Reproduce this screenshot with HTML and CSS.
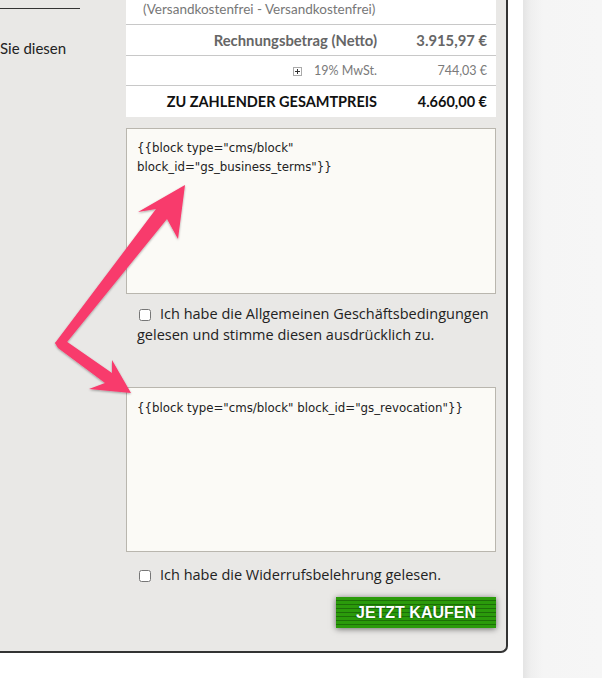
FILE: index.html
```html
<!DOCTYPE html>
<html lang="de">
<head>
    <meta charset="UTF-8">
    <title>Kasse - Bestellung abschließen</title>
    <link rel="stylesheet" href="styles.css">
</head>
<body>

<div class="page">
    <div class="panel">
        <div class="aside">
            <div class="rule"></div>
            <p class="cut">Sie diesen</p>
        </div>

        <div class="checkout">
            <!-- Summen -->
            <table class="totals">
                <tr class="row-shipping">
                    <td colspan="2">(Versandkostenfrei - Versandkostenfrei)</td>
                </tr>
                <tr class="row-net">
                    <td class="label">Rechnungsbetrag (Netto)</td>
                    <td class="value">3.915,97 €</td>
                </tr>
                <tr class="row-tax">
                    <td class="label">
                        <svg class="tax-icon" width="9" height="9" viewBox="0 0 9 9">
                            <rect x="0.5" y="0.5" width="8" height="8" fill="none" stroke="#555" stroke-dasharray="1 1"/>
                            <path d="M4.5 2v5M2 4.5h5" stroke="#333" stroke-width="1"/>
                        </svg>
                        19% MwSt.
                    </td>
                    <td class="value">744,03 €</td>
                </tr>
                <tr class="row-total">
                    <td class="label">ZU ZAHLENDER GESAMTPREIS</td>
                    <td class="value">4.660,00 €</td>
                </tr>
            </table>

            <!-- AGB -->
            <textarea class="terms terms-agb" readonly>{{block type="cms/block" block_id="gs_business_terms"}}</textarea>
            <label class="agree agree-agb">
                <input type="checkbox" id="agb">Ich habe die Allgemeinen Geschäftsbedingungen gelesen und stimme diesen ausdrücklich zu.
            </label>

            <!-- Widerruf -->
            <textarea class="terms terms-rev" readonly>{{block type="cms/block" block_id="gs_revocation"}}</textarea>
            <label class="agree agree-rev">
                <input type="checkbox" id="revocation">Ich habe die Widerrufsbelehrung gelesen.
            </label>

            <div class="actions">
                <button class="buy">JETZT KAUFEN</button>
            </div>
        </div>
    </div>

    <div class="spacer"></div>
    <div class="side"></div>

    <!-- Hinweispfeile -->
    <svg class="arrows" width="602" height="678" viewBox="0 0 602 678">
        <defs>
            <filter id="arrow-shadow" x="-20%" y="-20%" width="140%" height="140%">
                <feDropShadow dx="0" dy="1" stdDeviation="1.2" flood-color="#000" flood-opacity="0.35"/>
            </filter>
        </defs>
        <g fill="#f83a6c" filter="url(#arrow-shadow)">
            <polygon points="185,185 178,239 167,219 63,347 55,343 156,209 138,212"/>
            <polygon points="131,393 89,389 105,383 58,348 55,343 63,339 112,373 112,360"/>
        </g>
    </svg>
</div>

</body>
</html>
```

FILE: styles.css
```css
body {
    margin: 0;
    padding: 0;
    background-color: #fff;
    font-family: Lato, "Open Sans", sans-serif;
}

.page {
    position: relative;
    display: flex;
    width: 602px;
    height: 678px;
    overflow: hidden;
}

.panel {
    display: flex;
    width: 506px;
    height: 651px;
    background-color: #e9e8e6;
    border-right: 2px solid #333;
    border-bottom: 2px solid #333;
    border-bottom-right-radius: 7px;
}

.spacer {
    width: 15px;
}

.side {
    flex: 1;
    background: linear-gradient(to right, #e4e4e4 0px, #efefef 8px, #f5f5f5 20px, #f6f6f6 100%);
}

.aside {
    width: 126px;
}

.rule {
    width: 80px;
    height: 1px;
    margin-top: 8px;
    background-color: #333;
}

.cut {
    margin: 30px 0 0 0;
    font-size: 15px;
    color: #222;
}

.checkout {
    width: 370px;
}

.totals {
    width: 370px;
    border-collapse: collapse;
    background-color: #fff;
    font-size: 13.5px;
}

.totals td {
    padding: 0;
    border-bottom: 1px solid #c8c8c8;
}

.totals tr:last-child td {
    border-bottom: none;
}

.totals .label {
    width: 251px;
    text-align: right;
}

.totals .value {
    text-align: right;
    padding-right: 9px;
}

.row-shipping td {
    height: 24px;
    padding-left: 17px;
    color: #777;
    line-height: 18px;
    vertical-align: top;
}

.row-net td {
    height: 30px;
    font-size: 14.8px;
    font-weight: bold;
    color: #666;
}

.row-tax td {
    height: 29px;
    color: #7a7a7a;
    font-size: 12.5px;
}

.tax-icon {
    margin-right: 9px;
    vertical-align: -1px;
}

.row-total td {
    height: 31px;
    font-size: 14.5px;
    font-weight: bold;
    color: #111;
}

.terms {
    display: block;
    box-sizing: border-box;
    width: 370px;
    margin: 11px 0 0 0;
    padding: 10px 10px;
    background-color: #fbfaf6;
    border: 1px solid #b9b6ae;
    border-radius: 0;
    font-family: "DejaVu Sans", sans-serif;
    font-size: 11.8px;
    line-height: 19px;
    color: #222;
    resize: none;
    outline: none;
}

.terms-agb {
    height: 166px;
}

.terms-rev {
    height: 165px;
    margin-top: 42px;
    padding-top: 11px;
}

.agree {
    display: block;
    padding-left: 11px;
    font-family: "Open Sans", sans-serif;
    font-size: 14.5px;
    line-height: 21px;
    color: #222;
}

.agree input {
    width: 12px;
    height: 12px;
    margin: 0 9px 0 2px;
    vertical-align: -2px;
}

.agree-agb {
    margin-top: 9px;
}

.agree-rev {
    margin-top: 12px;
}

.actions {
    display: flex;
    justify-content: flex-end;
    margin-top: 12px;
}

.buy {
    width: 160px;
    height: 31px;
    padding: 0;
    border: none;
    background-color: #2b9b0b;
    background-image: repeating-linear-gradient(to bottom, #2b9b0b 0px, #2b9b0b 3px, #1d6f08 3px, #1d6f08 4px);
    box-shadow: 0 1px 6px rgba(0, 0, 0, 0.55);
    font-family: "Liberation Sans", Arial, sans-serif;
    font-size: 16px;
    font-weight: bold;
    color: #fff;
    text-shadow: 0 0 2px rgba(0, 60, 0, 0.8);
    cursor: pointer;
}

.arrows {
    position: absolute;
    top: 0;
    left: 0;
    pointer-events: none;
}
```
